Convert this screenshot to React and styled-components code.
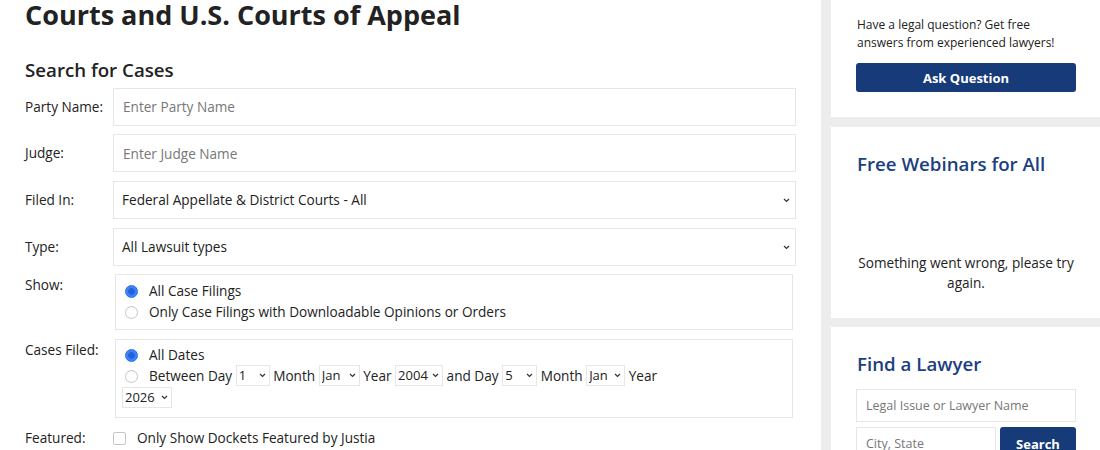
import React from 'react';
import styled, { createGlobalStyle } from 'styled-components';

const GlobalStyle = createGlobalStyle`
  body {
    margin: 0;
    font-family: "Open Sans", "Liberation Sans", sans-serif;
    color: #222;
    background: #fff;
  }
`;

const Page = styled.div`
  display: flex;
  align-items: stretch;
  height: 450px;
  overflow: hidden;
`;

const Main = styled.div`
  flex: 0 0 771px;
  margin-left: 25px;
`;

const Title = styled.h1`
  margin: -3.5px 0 0;
  font-size: 27px;
  line-height: 36px;
  font-weight: 700;
  color: #222;
`;

const SubTitle = styled.h2`
  margin: 23px 0 4px;
  font-size: 18.7px;
  line-height: 28px;
  font-weight: 600;
  color: #222;
`;

const Form = styled.div`
  display: grid;
  grid-template-columns: 88px 1fr;
  row-gap: 8.7px;
`;

const Label = styled.div`
  font-size: 13.6px;
  line-height: ${p => (p.$tall ? '38px' : '20px')};
  padding-top: ${p => (p.$top ? '1px' : '0')};
  color: #222;
`;

const TextInput = styled.input`
  box-sizing: border-box;
  width: ${p => (p.$w ? p.$w + 'px' : '100%')};
  height: ${p => p.$h || 38}px;
  margin-top: ${p => p.$mt || 0}px;
  flex-shrink: 0;
  border: 1px solid #e6e6e6;
  padding: 0 9px;
  font-family: inherit;
  font-size: ${p => p.$fs || 13.6}px;
  color: #222;
  outline: none;
  &::placeholder { color: #777; }
`;

const SelectBox = styled.span`
  position: relative;
  display: ${p => (p.$inline ? 'inline-block' : 'block')};
  vertical-align: top;
`;

const Select = styled.select`
  appearance: none;
  box-sizing: border-box;
  display: block;
  width: ${p => (p.$w ? p.$w + 'px' : '100%')};
  height: ${p => p.$h || 38}px;
  border: 1px solid #e6e6e6;
  border-radius: 0;
  background: #fff;
  padding: 0 0 0 ${p => p.$pl || 8}px;
  font-family: inherit;
  font-size: ${p => p.$fs || 13.6}px;
  color: #222;
  outline: none;
`;

const Chevron = styled.svg`
  position: absolute;
  right: ${p => p.$r}px;
  top: 50%;
  margin-top: -2px;
  pointer-events: none;
`;

const Box = styled.div`
  margin: 0 3px 0 2px;
  border: 1px solid #e6e6e6;
  padding: ${p => p.$pad};
  font-size: 13.6px;
  line-height: 21px;
`;

const Option = styled.label`
  display: block;
`;

const DateLine = styled.div`
  line-height: 22px;
`;

const Radio = styled.input.attrs({ type: 'radio' })`
  appearance: none;
  box-sizing: border-box;
  width: 13px;
  height: 13px;
  margin: 0 11px 0 3px;
  vertical-align: -2px;
  border-radius: 50%;
  border: 1px solid #c6c6c6;
  background: #fff;
  &:checked {
    border-color: #2b6fe6;
    background: radial-gradient(circle, #1f62db 0 3px, #3a83f5 3.5px);
  }
`;

const Check = styled.input.attrs({ type: 'checkbox' })`
  appearance: none;
  box-sizing: border-box;
  width: 13px;
  height: 13px;
  margin: 0 11px 0 0;
  vertical-align: -2px;
  border: 1px solid #c6c6c6;
  border-radius: 2px;
  background: #fff;
`;

const Featured = styled.label`
  font-size: 13.6px;
  line-height: 20px;
  padding-top: 1px;
`;

const Sidebar = styled.aside`
  flex: 0 0 272px;
  margin-left: 25px;
  padding-left: 10px;
  background: #ededed;
  display: flex;
  flex-direction: column;
  gap: 9.5px;
`;

const Panel = styled.section`
  flex-shrink: 0;
  background: #fff;
  padding: ${p => p.$pad || '23px 27px 25px 25px'};
  height: ${p => (p.$h ? p.$h + 'px' : 'auto')};
  box-sizing: border-box;
  display: flex;
  flex-direction: column;
`;

const Blurb = styled.p`
  margin: 0 0 0 1px;
  font-size: 12px;
  line-height: 18px;
  color: #222;
`;

const BlueButton = styled.button`
  flex-shrink: 0;
  height: ${p => p.$h || 29}px;
  width: ${p => (p.$w ? p.$w + 'px' : '100%')};
  margin-top: ${p => p.$mt || 0}px;
  border: none;
  border-radius: 3px;
  background: #173a78;
  color: #fff;
  font-family: inherit;
  font-weight: 700;
  font-size: 13px;
`;

const PanelHeading = styled.h3`
  margin: 0 0 0 1px;
  font-size: 18.7px;
  line-height: 28px;
  font-weight: 600;
  color: #1c3f80;
`;

const ErrorText = styled.p`
  margin: 75px -4px 0;
  font-size: 13.6px;
  line-height: 20px;
  text-align: center;
  color: #222;
`;

const SearchRow = styled.div`
  display: flex;
  flex-shrink: 0;
  gap: 4px;
  margin-top: 5px;
`;

const ChevronIcon = ({ r }) => (
  <Chevron $r={r} width="7" height="5" viewBox="0 0 7 5">
    <path d="M1 1l2.5 2.5L6 1" fill="none" stroke="#333" strokeWidth="1.2" />
  </Chevron>
);

const BigSelect = ({ value }) => (
  <SelectBox>
    <Select defaultValue={value}>
      <option>{value}</option>
    </Select>
    <ChevronIcon r={6} />
  </SelectBox>
);

const SmallSelect = ({ value, w }) => (
  <SelectBox $inline>
    <Select $w={w} $h={21} $fs={13} $pl={2} defaultValue={value}>
      <option>{value}</option>
    </Select>
    <ChevronIcon r={4} />
  </SelectBox>
);

export default function App() {
  return (
    <>
      <GlobalStyle />
      <Page>
        <Main>
          <Title>Courts and U.S. Courts of Appeal</Title>
          <SubTitle>Search for Cases</SubTitle>
          <Form>
            <Label $tall>Party Name:</Label>
            <TextInput placeholder="Enter Party Name" />
            <Label $tall>Judge:</Label>
            <TextInput placeholder="Enter Judge Name" />
            <Label $tall>Filed In:</Label>
            <BigSelect value="Federal Appellate & District Courts - All" />
            <Label $tall>Type:</Label>
            <BigSelect value="All Lawsuit types" />
            <Label $top>Show:</Label>
            <Box $pad="5px 6px 7px">
              <Option><Radio name="show" defaultChecked />All Case Filings</Option>
              <Option><Radio name="show" />Only Case Filings with Downloadable Opinions or Orders</Option>
            </Box>
            <Label $top>Cases Filed:</Label>
            <Box $pad="4px 6px 8px">
              <Option><Radio name="dates" defaultChecked />All Dates</Option>
              <DateLine>
                <Radio name="dates" />Between Day <SmallSelect value="1" w={34} /> Month{' '}
                <SmallSelect value="Jan" w={41} /> Year <SmallSelect value="2004" w={48} /> and Day{' '}
                <SmallSelect value="5" w={35} /> Month <SmallSelect value="Jan" w={39} /> Year
                <br />
                <SmallSelect value="2026" w={50} />
              </DateLine>
            </Box>
            <Label $top>Featured:</Label>
            <Featured><Check />Only Show Dockets Featured by Justia</Featured>
          </Form>
        </Main>
        <Sidebar>
          <Panel $pad="16px 27px 25px 25px" $h={117}>
            <Blurb>Have a legal question? Get free answers from experienced lawyers!</Blurb>
            <BlueButton $mt={11}>Ask Question</BlueButton>
          </Panel>
          <Panel $h={191}>
            <PanelHeading>Free Webinars for All</PanelHeading>
            <ErrorText>Something went wrong, please try again.</ErrorText>
          </Panel>
          <Panel>
            <PanelHeading>Find a Lawyer</PanelHeading>
            <TextInput $h={33} $fs={12.5} $mt={11} placeholder="Legal Issue or Lawyer Name" />
            <SearchRow>
              <TextInput $h={33} $fs={12.5} $w={140} placeholder="City, State" />
              <BlueButton $h={33} $w={76}>Search</BlueButton>
            </SearchRow>
          </Panel>
        </Sidebar>
      </Page>
    </>
  );
}
